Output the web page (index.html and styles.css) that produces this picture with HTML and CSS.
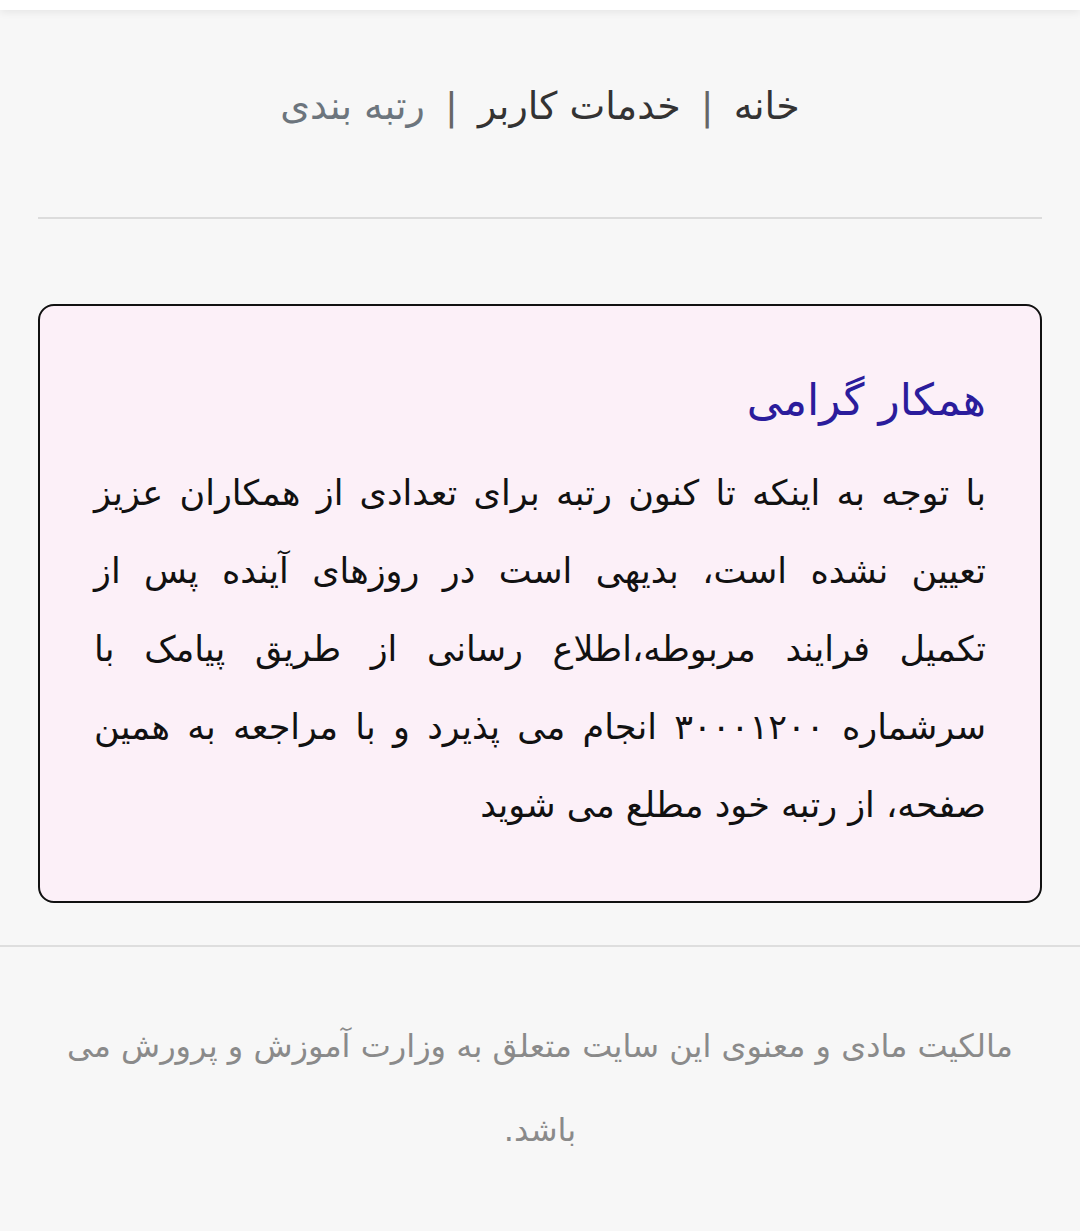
FILE: index.html
```html
<!DOCTYPE html>
<html lang="fa" dir="rtl">
<head>
  <meta charset="UTF-8" />
  <title>رتبه بندی</title>
  <link rel="stylesheet" href="styles.css">
</head>
<body>
  <div class="topbar"></div>

  <nav class="breadcrumb">
    <a href="#">خانه</a>
    <span class="sep">|</span>
    <a href="#">خدمات کاربر</a>
    <span class="sep">|</span>
    <span class="current">رتبه بندی</span>
  </nav>

  <hr class="line">

  <main class="content">
    <div class="notice">
      <h2>همکار گرامی</h2>
      <p>
        <span class="ln">با توجه به اینکه تا کنون رتبه برای تعدادی از همکاران عزیز</span>
        <span class="ln">تعیین نشده است، بدیهی است در روزهای آینده پس از</span>
        <span class="ln">تکمیل فرایند مربوطه،اطلاع رسانی از طریق پیامک با</span>
        <span class="ln">سرشماره ۳۰۰۰۱۲۰۰ انجام می پذیرد و با مراجعه به همین</span>
        <span class="ln last">صفحه، از رتبه خود مطلع می شوید</span>
      </p>
    </div>
  </main>

  <footer>
    مالکیت مادی و معنوی این سایت متعلق به وزارت آموزش و پرورش می باشد.
  </footer>
</body>
</html>
```

FILE: styles.css
```css
html, body {
  margin: 0;
  padding: 0;
  background: #f7f7f7;
  font-family: 'DejaVu Sans', sans-serif;
}
.topbar {
  height: 10px;
  background: #fff;
  box-shadow: 0 2px 8px rgba(0,0,0,0.08);
}
.breadcrumb {
  text-align: center;
  font-size: 38px;
  padding: 72px 0 86px;
  line-height: 1.3;
  color: #333;
}
.breadcrumb a {
  color: #333;
  text-decoration: none;
}
.breadcrumb .sep {
  color: #666;
  margin: 0 8px;
}
.breadcrumb .current {
  color: #6c757d;
}
.line {
  margin: 0 38px;
  border: 0;
  border-top: 2px solid #dcdcdc;
}
.content {
  padding: 85px 38px 42px;
  border-bottom: 2px solid #dedede;
}
.notice {
  background: #fcf0f8;
  border: 2px solid #111;
  border-radius: 16px;
  padding: 65px 54px 57px;
}
.notice h2 {
  margin: 0 0 25px;
  font-size: 44px;
  line-height: 1.3;
  font-weight: normal;
  color: #2b1c9c;
}
.notice p {
  margin: 0;
  font-size: 35px;
  line-height: 78px;
  color: #111;
}
.notice .ln {
  display: block;
  text-align: justify;
  text-align-last: justify;
}
.notice .ln.last {
  text-align-last: right;
}
footer {
  text-align: center;
  color: #8a8a8a;
  font-size: 32px;
  line-height: 84px;
  padding: 57px 64px 60px;
}
```
